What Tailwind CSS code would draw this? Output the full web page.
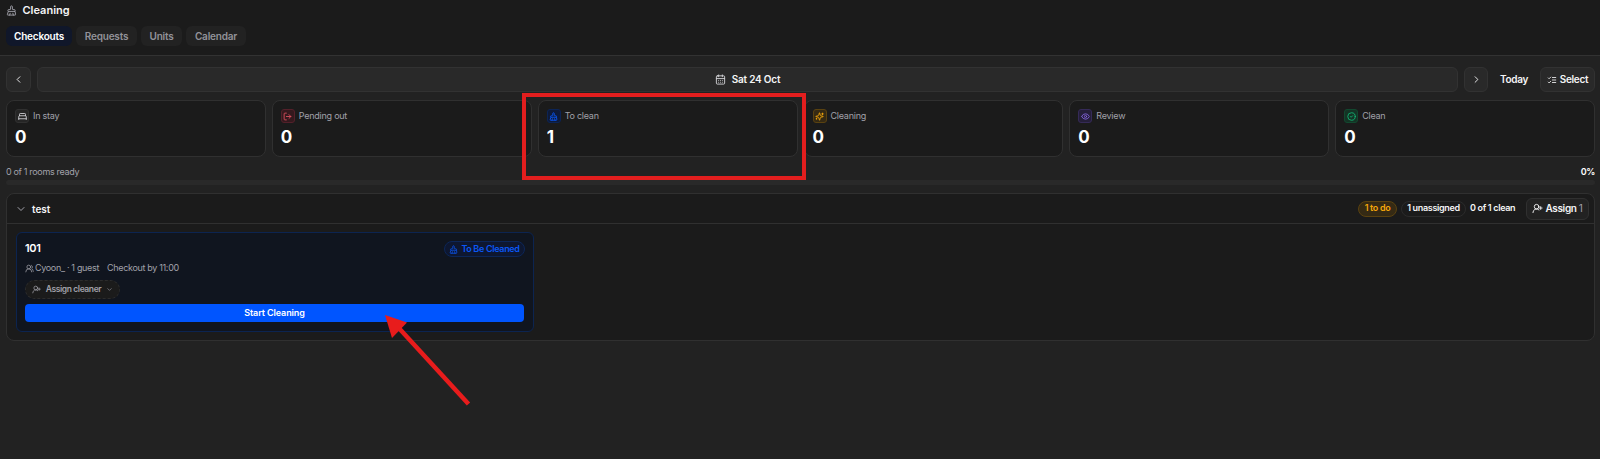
<!DOCTYPE html>
<html lang="en">

<head>
    <meta charset="UTF-8" />
    <meta name="viewport" content="width=device-width, initial-scale=1.0" />
    <title>Cleaning</title>
    <script src="https://cdn.jsdelivr.net/npm/@tailwindcss/browser@4"></script>
</head>

<body class="relative h-[459px] overflow-hidden bg-[#222222] font-['Inter',sans-serif] text-[9px] leading-none tracking-[-0.33px] whitespace-nowrap text-[#f4f4f5]">
    <!-- icon sprite -->
    <svg class="hidden">
        <symbol id="brush" viewBox="0 0 24 24" stroke-linecap="round" stroke-linejoin="round">
            <path d="m16 22-1-4M19 14a1 1 0 0 0 1-1v-1a2 2 0 0 0-2-2h-3a1 1 0 0 1-1-1V4a2 2 0 0 0-4 0v5a1 1 0 0 1-1 1H6a2 2 0 0 0-2 2v1a1 1 0 0 0 1 1M19 14H5l-1.97 6.77A1 1 0 0 0 4 22h16a1 1 0 0 0 .97-1.23zM8 22l1-4" />
        </symbol>
        <symbol id="calendar" viewBox="0 0 24 24" stroke-linecap="round" stroke-linejoin="round">
            <rect x="3" y="4" width="18" height="18" rx="2" />
            <path d="M8 2v4M16 2v4M3 10h18M8 14h.01M12 14h.01M16 14h.01M8 18h.01M12 18h.01M16 18h.01" />
        </symbol>
        <symbol id="left" viewBox="0 0 24 24" stroke-linecap="round" stroke-linejoin="round"><path d="m15 18-6-6 6-6" /></symbol>
        <symbol id="right" viewBox="0 0 24 24" stroke-linecap="round" stroke-linejoin="round"><path d="m9 18 6-6-6-6" /></symbol>
        <symbol id="down" viewBox="0 0 24 24" stroke-linecap="round" stroke-linejoin="round"><path d="m6 9 6 6 6-6" /></symbol>
        <symbol id="checks" viewBox="0 0 24 24" stroke-linecap="round" stroke-linejoin="round"><path d="m3 17 2 2 4-4M3 7l2 2 4-4M13 6h8M13 12h8M13 18h8" /></symbol>
        <symbol id="bed" viewBox="0 0 24 24" stroke-linecap="round" stroke-linejoin="round"><path d="M2 20v-8a2 2 0 0 1 2-2h16a2 2 0 0 1 2 2v8M4 10V6a2 2 0 0 1 2-2h12a2 2 0 0 1 2 2v4M2 18h20" /></symbol>
        <symbol id="logout" viewBox="0 0 24 24" stroke-linecap="round" stroke-linejoin="round"><path d="M9 21H5a2 2 0 0 1-2-2V5a2 2 0 0 1 2-2h4M16 17l5-5-5-5M21 12H9" /></symbol>
        <symbol id="sparkles" viewBox="0 0 24 24" stroke-linecap="round" stroke-linejoin="round"><path d="M10 15.5A2 2 0 0 0 8.5 14l-6-1.6a.5.5 0 0 1 0-1L8.5 10A2 2 0 0 0 10 8.5l1.5-6a.5.5 0 0 1 1 0L14 8.5A2 2 0 0 0 15.5 10l6 1.5a.5.5 0 0 1 0 1L15.5 14a2 2 0 0 0-1.5 1.5l-1.5 6a.5.5 0 0 1-1 0zM20 3v4M22 5h-4M4 17v2M5 18H3" /></symbol>
        <symbol id="eye" viewBox="0 0 24 24" stroke-linecap="round" stroke-linejoin="round">
            <path d="M2 12.3a1 1 0 0 1 0-.6 10.75 10.75 0 0 1 20 0 1 1 0 0 1 0 .6 10.75 10.75 0 0 1-20 0" />
            <circle cx="12" cy="12" r="3" />
        </symbol>
        <symbol id="check" viewBox="0 0 24 24" stroke-linecap="round" stroke-linejoin="round"><circle cx="12" cy="12" r="10" /><path d="m9 12 2 2 4-4" /></symbol>
        <symbol id="users" viewBox="0 0 24 24" stroke-linecap="round" stroke-linejoin="round"><path d="M18 21a8 8 0 0 0-16 0M22 20c0-3.37-2-6.5-4-8a5 5 0 0 0-.45-8.3" /><circle cx="10" cy="8" r="5" /></symbol>
        <symbol id="userplus" viewBox="0 0 24 24" stroke-linecap="round" stroke-linejoin="round"><path d="M2 21a8 8 0 0 1 13.3-6M19 8v6M22 11h-6" /><circle cx="10" cy="8" r="5" /></symbol>
    </svg>

    <header class="h-14 border-b border-[#323232] bg-[#1b1b1b] px-1.5 pt-1">
        <div class="flex h-3 items-center gap-[5.5px]">
            <svg class="size-[11px] fill-none stroke-[#a1a1aa] stroke-2"><use href="#brush" /></svg>
            <h1 class="text-[11px] font-semibold tracking-normal">Cleaning</h1>
        </div>
        <nav class="mt-2.5 flex h-5 gap-1 text-[10px] font-semibold tracking-[-0.2px] text-[#929299]">
            <a class="flex w-[66px] items-center justify-center rounded-md bg-[#10172a] text-white">Checkouts</a>
            <a class="flex w-[61px] items-center justify-center rounded-md bg-[#222222]">Requests</a>
            <a class="flex w-[41px] items-center justify-center rounded-md bg-[#222222]">Units</a>
            <a class="flex w-[60px] items-center justify-center rounded-md bg-[#222222]">Calendar</a>
        </nav>
    </header>

    <main class="pt-[11px] pr-[5px] pl-1.5">
        <div class="flex h-[25px] gap-1.5 text-[10px] font-semibold">
            <button class="flex w-[25px] items-center justify-center rounded-md border border-[#323232] bg-[#292929]">
                <svg class="size-[11px] fill-none stroke-current stroke-2"><use href="#left" /></svg>
            </button>
            <button class="flex flex-1 items-center justify-center gap-1.5 rounded-md border border-[#323232] bg-[#292929] tracking-[-0.2px]">
                <svg class="size-[11px] fill-none stroke-[#d4d4d8] stroke-2"><use href="#calendar" /></svg>
                <span class="pb-px">Sat 24 Oct</span>
            </button>
            <button class="flex w-6 items-center justify-center rounded-md border border-[#323232] bg-[#292929]">
                <svg class="size-[11px] fill-none stroke-current stroke-2"><use href="#right" /></svg>
            </button>
            <button class="w-10 pb-0.5">Today</button>
            <button class="flex w-[55px] items-center justify-center gap-[3px] rounded-md border border-[#323232] bg-[#292929]">
                <svg class="size-2.5 fill-none stroke-current stroke-2"><use href="#checks" /></svg>
                <span class="pb-0.5">Select</span>
            </button>
        </div>

        <div class="mt-2 grid h-[57px] grid-cols-6 gap-1.5 tracking-[-0.25px] text-[#a1a1aa]">
            <div class="rounded-lg border border-[#303030] bg-[#1b1b1b] px-2 pt-2">
                <div class="flex items-center gap-1">
                    <span class="flex size-3.5 items-center justify-center rounded-[3px] border border-[#303030] bg-[#252525]"><svg class="size-[9px] fill-none stroke-[#d4d4d8] stroke-[2.3]"><use href="#bed" /></svg></span>
                    <span class="pb-0.5">In stay</span>
                </div>
                <p class="mt-1.5 text-[17px] font-bold text-white">0</p>
            </div>
            <div class="rounded-lg border border-[#303030] bg-[#1b1b1b] px-2 pt-2">
                <div class="flex items-center gap-1">
                    <span class="flex size-3.5 items-center justify-center rounded-[3px] border border-[#54202a] bg-[#34191e]"><svg class="size-[9px] fill-none stroke-[#e0525f] stroke-[2.3]"><use href="#logout" /></svg></span>
                    <span class="pb-0.5">Pending out</span>
                </div>
                <p class="mt-1.5 text-[17px] font-bold text-white">0</p>
            </div>
            <div class="rounded-lg border border-[#303030] bg-[#1b1b1b] px-2 pt-2">
                <div class="flex items-center gap-1">
                    <span class="flex size-3.5 items-center justify-center rounded-[3px] border border-[#0c2456] bg-[#0e1a38]"><svg class="size-[9px] fill-none stroke-[#0b57f5] stroke-[2.3]"><use href="#brush" /></svg></span>
                    <span class="pb-0.5">To clean</span>
                </div>
                <p class="mt-1.5 text-[17px] font-bold text-white">1</p>
            </div>
            <div class="rounded-lg border border-[#303030] bg-[#1b1b1b] px-2 pt-2">
                <div class="flex items-center gap-1">
                    <span class="flex size-3.5 items-center justify-center rounded-[3px] border border-[#5a4210] bg-[#352a14]"><svg class="size-[9px] fill-none stroke-[#f5a70b] stroke-[2.3]"><use href="#sparkles" /></svg></span>
                    <span class="pb-0.5">Cleaning</span>
                </div>
                <p class="mt-1.5 text-[17px] font-bold text-white">0</p>
            </div>
            <div class="rounded-lg border border-[#303030] bg-[#1b1b1b] px-2 pt-2">
                <div class="flex items-center gap-1">
                    <span class="flex size-3.5 items-center justify-center rounded-[3px] border border-[#352a58] bg-[#251f3a]"><svg class="size-[9px] fill-none stroke-[#8464dc] stroke-[2.3]"><use href="#eye" /></svg></span>
                    <span class="pb-0.5">Review</span>
                </div>
                <p class="mt-1.5 text-[17px] font-bold text-white">0</p>
            </div>
            <div class="rounded-lg border border-[#303030] bg-[#1b1b1b] px-2 pt-2">
                <div class="flex items-center gap-1">
                    <span class="flex size-3.5 items-center justify-center rounded-[3px] border border-[#12482f] bg-[#143325]"><svg class="size-[9px] fill-none stroke-[#14b877] stroke-[2.3]"><use href="#check" /></svg></span>
                    <span class="pb-0.5">Clean</span>
                </div>
                <p class="mt-1.5 text-[17px] font-bold text-white">0</p>
            </div>
        </div>

        <div class="mt-2.5 flex justify-between text-[#a1a1aa]">
            <span>0 of 1 rooms ready</span>
            <span class="font-semibold text-white">0%</span>
        </div>
        <div class="mt-1 h-[5px] rounded-full bg-[#292929]"></div>

        <section class="mt-2 h-[148px] rounded-lg border border-[#303030] bg-[#1b1b1b]">
            <div class="flex h-[30px] items-center border-b border-[#303030] pr-[5px] pl-2 font-semibold">
                <svg class="size-3 fill-none stroke-[#a1a1aa] stroke-2"><use href="#down" /></svg>
                <h2 class="ml-[5px] text-[10px] tracking-normal">test</h2>
                <span class="ml-auto flex h-4 w-[39px] items-center justify-center rounded-full border border-[#5a4210] bg-[#352a14] pb-0.5 text-[#f5a70b]">1 to do</span>
                <span class="ml-1 flex h-4 w-[65px] items-center justify-center rounded-full border border-[#2b2b2b] pb-0.5">1 unassigned</span>
                <span class="ml-1 w-[46px] pb-0.5">0 of 1 clean</span>
                <button class="ml-2.5 flex h-[22px] w-[63px] items-center justify-center gap-0.5 rounded-md border border-[#303030] bg-[#222222] text-[10px]">
                    <svg class="size-[11px] fill-none stroke-current stroke-2"><use href="#userplus" /></svg>
                    <span class="pb-px">Assign <span class="font-normal text-[#a1a1aa]">1</span></span>
                </button>
            </div>

            <article class="mt-2 ml-[9px] h-[100px] w-[518px] rounded-md border border-[#0c2450] bg-[#10151f] pt-2 pr-2 pl-2">
                <div class="flex h-4 items-center justify-between">
                    <h3 class="pb-0.5 text-[11px] font-semibold text-white">101</h3>
                    <span class="flex h-4 w-[81px] items-center justify-center gap-[3px] rounded-full border border-[#0c2658] bg-[#0e1730] font-semibold text-[#0b57f5]">
                        <svg class="size-[9px] fill-none stroke-current stroke-2"><use href="#brush" /></svg>
                        <span class="pb-0.5">To Be Cleaned</span>
                    </span>
                </div>
                <div class="mt-1.5 flex h-2.5 items-center text-[#a1a1aa]">
                    <svg class="mr-px size-[9px] fill-none stroke-current stroke-2"><use href="#users" /></svg>
                    <span class="pb-0.5">Cyoon_ · 1 guest</span>
                    <span class="ml-2 pb-0.5">Checkout by 11:00</span>
                </div>
                <button class="mt-[7px] flex h-[19px] w-[95px] items-center justify-center gap-[5px] rounded-full border border-dashed border-[#2c2c2c] bg-[#1b1b1b] text-[8.5px] font-semibold tracking-[-0.4px] text-[#a1a1aa]">
                    <svg class="size-[9px] fill-none stroke-current stroke-2"><use href="#userplus" /></svg>
                    Assign cleaner
                    <svg class="size-[7px] fill-none stroke-current stroke-2"><use href="#down" /></svg>
                </button>
                <button class="mt-[5px] h-[18px] w-[499px] rounded bg-[#0055ff] pb-0.5 font-semibold tracking-[-0.1px] text-white">Start Cleaning</button>
            </article>
        </section>
    </main>

    <!-- highlight and pointer -->
    <div class="absolute top-[93px] left-[522px] h-[87px] w-[284px] border-4 border-[#e31e1e]"></div>
    <svg class="absolute top-[310px] left-[380px]" width="95" height="100">
        <path d="M17 16 88.5 94" stroke="#e81c1c" stroke-width="4.5" />
        <path d="M5 5 27 12.5 12 28Z" fill="#e81c1c" />
    </svg>
</body>

</html>
